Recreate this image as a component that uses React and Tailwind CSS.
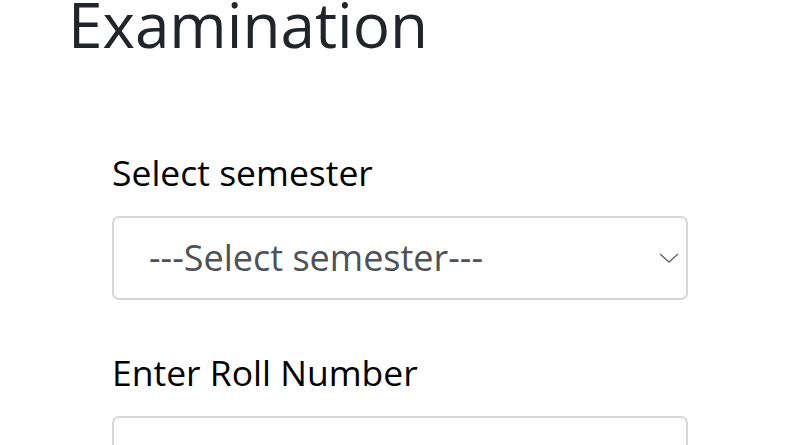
import React from 'react';

export default function App() {
  return (
    <div className="w-[800px] h-[445px] overflow-hidden bg-white font-['Open_Sans',sans-serif] text-[#212529]">
      <div className="px-[68px] -mt-[19px]">
        <h1 className="text-[62px] leading-[86px] font-normal">Examination</h1>
      </div>
      <form className="mx-[112px] mt-[82px]">
        <div className="mb-[49px]">
          <label className="block text-[35.5px] leading-[46px] text-black mb-[21px]">Select semester</label>
          <div className="relative">
            <select className="appearance-none w-full h-[84px] rounded-[7px] border-2 border-[#d4d7da] bg-white pl-[35px] pr-[60px] text-[36px] text-[#4d5258] outline-none">
              <option>---Select semester---</option>
            </select>
            <svg className="absolute right-[8px] top-1/2 -translate-y-1/2 w-[22px] h-[22px]" viewBox="0 0 22 22" fill="none" stroke="#666" strokeWidth="1.4">
              <path d="M2 7 L11 15 L20 7" />
            </svg>
          </div>
        </div>
        <div>
          <label className="block text-[35.5px] leading-[46px] text-black mb-[21px]">Enter Roll Number</label>
          <input className="w-full h-[84px] rounded-[7px] border-2 border-[#d4d7da] bg-white px-[35px] text-[36px] outline-none" />
        </div>
      </form>
    </div>
  );
}
